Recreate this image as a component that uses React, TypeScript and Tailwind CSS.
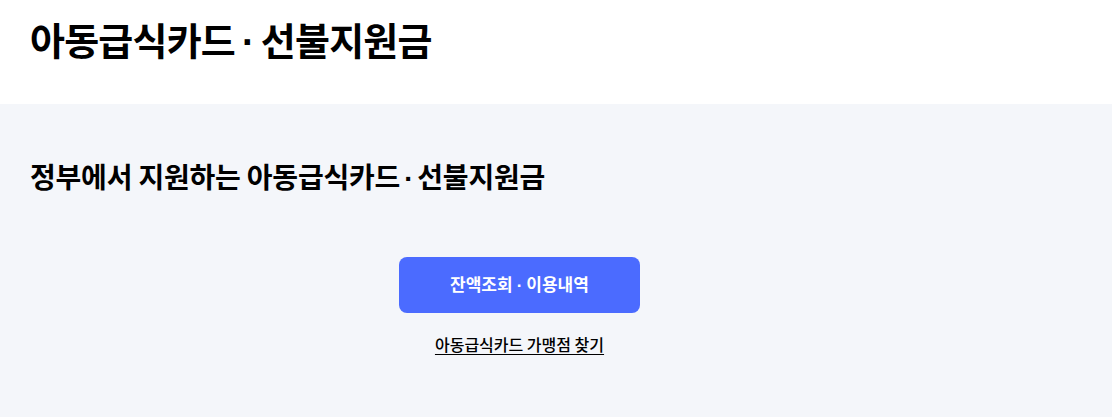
import React from 'react';

const font = { fontFamily: '"Noto Sans CJK KR", "Noto Sans", sans-serif' };

// narrow latin middle dot, the CJK one is full width
const Dot: React.FC<{ className?: string }> = ({ className = '' }) => (
  <span className={`font-['Liberation_Sans'] ${className}`}>·</span>
);

const App: React.FC = () => {
  return (
    <div className="w-[1112px] h-[418px] bg-white text-black" style={font}>
      <header className="h-[104px] px-[30px] pt-[13px]">
        <h1 className="text-[38px] font-bold leading-[52px] tracking-[-0.8px]">
          아동급식카드<Dot className="mx-[7px]" />선불지원금
        </h1>
      </header>
      <main className="h-[313px] bg-[#f4f6fa] px-[30px] pt-[52px]">
        <h2 className="text-[28px] font-bold leading-[40px] tracking-[-0.2px]">
          정부에서 지원하는 아동급식카드<Dot className="mx-[4px]" />선불지원금
        </h2>
        <div className="w-[979px] flex flex-col items-center mt-[58px]">
          <button className="w-[241px] h-[56px] rounded-[8px] bg-[#4b6bff] text-white text-[17px] font-bold">
            잔액조회<Dot className="mx-[4px]" />이용내역
          </button>
          <a href="#" className="mt-[19px] text-[16px] font-medium underline underline-offset-[3px]">
            아동급식카드 가맹점 찾기
          </a>
        </div>
      </main>
    </div>
  );
};

export default App;
